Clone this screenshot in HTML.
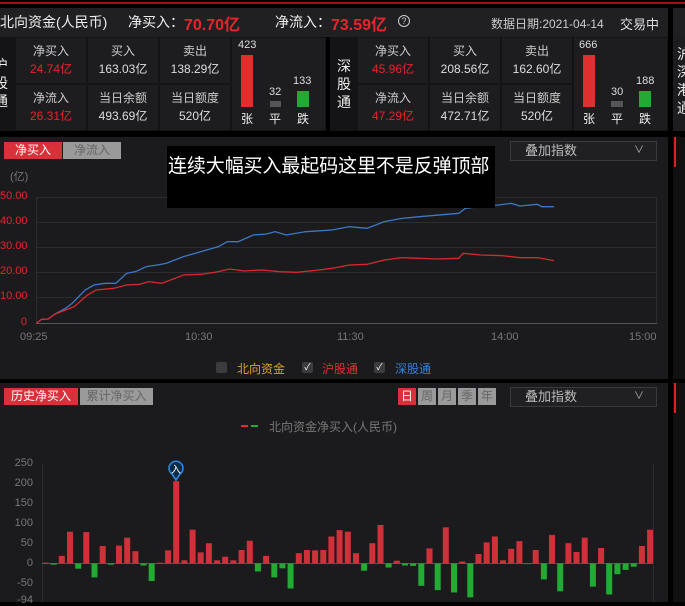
<!DOCTYPE html>
<html><head><meta charset="utf-8"><style>
*{margin:0;padding:0;box-sizing:border-box}
body{width:685px;height:602px;background:#000;overflow:hidden;position:relative;font-family:"Liberation Sans","Noto Sans CJK SC",sans-serif;color:#ddd}
.a{position:absolute;white-space:nowrap}
.red{color:#e8242b}
.cell{position:absolute;background:#1d1d20;text-align:center;font-size:12px;color:#ccc}
.cell .l{position:absolute;top:4px;left:0;right:0}
.cell .v{position:absolute;top:22px;left:0;right:0;color:#ddd}
.cell .v.red{color:#e8242b}
.btn{position:absolute;font-size:12px;text-align:center;line-height:17px}
.cb{position:absolute;width:11px;height:11px;background:#3c3c40;border-radius:2px;color:#fff;font-size:9px;line-height:11px;text-align:center}
</style></head><body>
<div class="a" style="left:0;top:2px;width:685px;height:2px;background:#a01010"></div>
<div class="a" style="left:0;top:8px;width:668px;height:29px;background:#202023"></div>
<div class="a" style="left:0;top:12px;font-size:14px;color:#eee">北向资金(人民币)</div>
<div class="a" style="left:128px;top:12px;font-size:14px;color:#eee">净买入：</div>
<div class="a red" style="left:184px;top:11px;font-size:16px;font-weight:bold">70.70亿</div>
<div class="a" style="left:275px;top:12px;font-size:14px;color:#eee">净流入：</div>
<div class="a red" style="left:331px;top:11px;font-size:16px;font-weight:bold">73.59亿</div>
<div class="a" style="left:398px;top:15px;width:12px;height:12px;border:1px solid #ccc;border-radius:50%;font-size:9px;text-align:center;line-height:10px;color:#ccc">?</div>
<div class="a" style="left:491px;top:15px;font-size:12px;color:#ccc">数据日期:2021-04-14</div>
<div class="a" style="left:620px;top:14px;font-size:13px;color:#ddd">交易中</div>
<div class="a" style="left:673px;top:8px;width:12px;height:29px;background:#202023"></div>

<!-- left panel -->
<div class="a" style="left:0;top:37px;width:326px;height:94px;background:#141416"></div>
<div class="a" style="left:-6px;top:56px;font-size:14px;line-height:18px;color:#eee;width:14px;white-space:normal">沪股通</div>
<div class="cell" style="left:16px;top:38px;width:70px;height:45px"><div class="l">净买入</div><div class="v red">24.74亿</div></div>
<div class="cell" style="left:88px;top:38px;width:70px;height:45px"><div class="l">买入</div><div class="v">163.03亿</div></div>
<div class="cell" style="left:160px;top:38px;width:70px;height:45px"><div class="l">卖出</div><div class="v">138.29亿</div></div>
<div class="cell" style="left:16px;top:85px;width:70px;height:45px"><div class="l">净流入</div><div class="v red">26.31亿</div></div>
<div class="cell" style="left:88px;top:85px;width:70px;height:45px"><div class="l">当日余额</div><div class="v">493.69亿</div></div>
<div class="cell" style="left:160px;top:85px;width:70px;height:45px"><div class="l">当日额度</div><div class="v">520亿</div></div>
<div class="a" style="left:232px;top:38px;width:93px;height:92px;background:#1d1d20"></div>
<div class="a" style="left:238px;top:39px;font-size:11px;color:#ddd">423</div>
<div class="a" style="left:241px;top:55px;width:12px;height:52px;background:#e02f2f"></div>
<div class="a" style="left:241px;top:110px;font-size:12px;color:#eee">张</div>
<div class="a" style="left:269px;top:86px;font-size:11px;color:#ddd">32</div>
<div class="a" style="left:270px;top:101px;width:11px;height:6px;background:#555"></div>
<div class="a" style="left:269px;top:110px;font-size:12px;color:#eee">平</div>
<div class="a" style="left:293px;top:75px;font-size:11px;color:#ddd">133</div>
<div class="a" style="left:297px;top:91px;width:12px;height:16px;background:#22aa33"></div>
<div class="a" style="left:297px;top:110px;font-size:12px;color:#eee">跌</div>

<!-- right panel -->
<div class="a" style="left:330px;top:37px;width:338px;height:94px;background:#141416"></div>
<div class="a" style="left:337px;top:57px;font-size:14px;line-height:18px;color:#eee;width:14px;white-space:normal">深股通</div>
<div class="cell" style="left:358px;top:38px;width:70px;height:45px"><div class="l">净买入</div><div class="v red">45.96亿</div></div>
<div class="cell" style="left:430px;top:38px;width:70px;height:45px"><div class="l">买入</div><div class="v">208.56亿</div></div>
<div class="cell" style="left:502px;top:38px;width:70px;height:45px"><div class="l">卖出</div><div class="v">162.60亿</div></div>
<div class="cell" style="left:358px;top:85px;width:70px;height:45px"><div class="l">净流入</div><div class="v red">47.29亿</div></div>
<div class="cell" style="left:430px;top:85px;width:70px;height:45px"><div class="l">当日余额</div><div class="v">472.71亿</div></div>
<div class="cell" style="left:502px;top:85px;width:70px;height:45px"><div class="l">当日额度</div><div class="v">520亿</div></div>
<div class="a" style="left:574px;top:38px;width:93px;height:92px;background:#1d1d20"></div>
<div class="a" style="left:579px;top:39px;font-size:11px;color:#ddd">666</div>
<div class="a" style="left:583px;top:55px;width:12px;height:52px;background:#e02f2f"></div>
<div class="a" style="left:583px;top:110px;font-size:12px;color:#eee">张</div>
<div class="a" style="left:611px;top:86px;font-size:11px;color:#ddd">30</div>
<div class="a" style="left:611px;top:101px;width:12px;height:6px;background:#555"></div>
<div class="a" style="left:611px;top:110px;font-size:12px;color:#eee">平</div>
<div class="a" style="left:636px;top:75px;font-size:11px;color:#ddd">188</div>
<div class="a" style="left:639px;top:91px;width:12px;height:16px;background:#22aa33"></div>
<div class="a" style="left:639px;top:110px;font-size:12px;color:#eee">跌</div>
<div class="a" style="left:673px;top:37px;width:12px;height:94px;background:#1d1d20"></div>
<div class="a" style="left:677px;top:45px;font-size:14px;line-height:18px;color:#eee;width:10px;white-space:normal">沪深港通</div>

<!-- main chart -->
<div class="a" style="left:0;top:137px;width:668px;height:242px;background:#1b1b1e"></div>
<div class="a" style="left:673px;top:137px;width:12px;height:242px;background:#111"></div>
<div class="a" style="left:674px;top:137px;width:2px;height:30px;background:#e02020"></div>
<div class="btn" style="left:4px;top:142px;width:58px;background:#d9303a;color:#fff">净买入</div>
<div class="btn" style="left:63px;top:142px;width:58px;background:#9a9a9a;color:#666">净流入</div>
<div class="a" style="left:510px;top:141px;width:147px;height:20px;border:1px solid #3a3a3e;background:#202023;font-size:13px;color:#bbb;padding-left:14px;line-height:18px">叠加指数<span style="position:absolute;right:12px;font-size:10px">∨</span></div>
<div class="a" style="left:10px;top:168px;font-size:11px;color:#777">(亿)</div>
<div class="a red" style="left:0;top:190px;font-size:11px;width:27px;text-align:right">50.00</div>
<div class="a red" style="left:0;top:215px;font-size:11px;width:27px;text-align:right">40.00</div>
<div class="a red" style="left:0;top:240px;font-size:11px;width:27px;text-align:right">30.00</div>
<div class="a red" style="left:0;top:265px;font-size:11px;width:27px;text-align:right">20.00</div>
<div class="a red" style="left:0;top:290px;font-size:11px;width:27px;text-align:right">10.00</div>
<div class="a red" style="left:0;top:316px;font-size:11px;width:27px;text-align:right">0</div>
<div class="a" style="left:20px;top:331px;font-size:11px;color:#777">09:25</div>
<div class="a" style="left:185px;top:331px;font-size:11px;color:#777">10:30</div>
<div class="a" style="left:337px;top:331px;font-size:11px;color:#777">11:30</div>
<div class="a" style="left:491px;top:331px;font-size:11px;color:#777">14:00</div>
<div class="a" style="left:629px;top:331px;font-size:11px;color:#777">15:00</div>
<div class="cb" style="left:216px;top:362px"></div>
<div class="a" style="left:237px;top:360px;font-size:12px;color:#e0a020">北向资金</div>
<div class="cb" style="left:302px;top:362px">✓</div>
<div class="a" style="left:322px;top:360px;font-size:12px;color:#e02f2f">沪股通</div>
<div class="cb" style="left:374px;top:362px">✓</div>
<div class="a" style="left:395px;top:360px;font-size:12px;color:#3b7fd0">深股通</div>

<!-- bottom -->
<div class="a" style="left:0;top:383px;width:668px;height:219px;background:#1b1b1e"></div>
<div class="a" style="left:673px;top:383px;width:12px;height:219px;background:#111"></div>
<div class="a" style="left:674px;top:383px;width:2px;height:30px;background:#e02020"></div>
<div class="btn" style="left:4px;top:388px;width:74px;background:#d9303a;color:#fff">历史净买入</div>
<div class="btn" style="left:80px;top:388px;width:73px;background:#9a9a9a;color:#666">累计净买入</div>
<div class="btn" style="left:398px;top:388px;width:18px;background:#d9303a;color:#fff">日</div>
<div class="btn" style="left:418px;top:388px;width:18px;background:#9a9a9a;color:#666">周</div>
<div class="btn" style="left:438px;top:388px;width:18px;background:#9a9a9a;color:#666">月</div>
<div class="btn" style="left:458px;top:388px;width:18px;background:#9a9a9a;color:#666">季</div>
<div class="btn" style="left:478px;top:388px;width:18px;background:#9a9a9a;color:#666">年</div>
<div class="a" style="left:510px;top:387px;width:147px;height:20px;border:1px solid #3a3a3e;background:#202023;font-size:13px;color:#bbb;padding-left:14px;line-height:18px">叠加指数<span style="position:absolute;right:12px;font-size:10px">∨</span></div>
<div class="a" style="left:241px;top:425px;width:7px;height:2px;background:#e02f2f"></div>
<div class="a" style="left:251px;top:425px;width:7px;height:2px;background:#22aa33"></div>
<div class="a" style="left:269px;top:418px;font-size:12px;color:#777">北向资金净买入(人民币)</div>
<div id="yl"></div>

<svg class="a" style="left:0;top:0" width="685" height="602" id="sv">
<g stroke="#2c2c30" stroke-width="1">
<line x1="36" y1="197.5" x2="657" y2="197.5"/><line x1="36" y1="222.5" x2="657" y2="222.5"/><line x1="36" y1="247.5" x2="657" y2="247.5"/><line x1="36" y1="272.5" x2="657" y2="272.5"/><line x1="36" y1="297.5" x2="657" y2="297.5"/>
<line x1="36.5" y1="197" x2="36.5" y2="323"/><line x1="656.5" y1="197" x2="656.5" y2="323"/>
<line x1="42.5" y1="464" x2="42.5" y2="602"/><line x1="653.5" y1="464" x2="653.5" y2="602"/>
</g>
<line x1="36" y1="323.5" x2="657" y2="323.5" stroke="#555"/>
<line x1="42" y1="563.5" x2="653" y2="563.5" stroke="#555"/>
<g transform="translate(0,135) scale(0.43687,0.33333)" fill="none">
<polyline stroke="#3b78c8" stroke-width="1.3" vector-effect="non-scaling-stroke" points="83,565 95,553 110,552 125,538 150,520 165,505 195,465 215,450 240,445 265,445 290,415 310,410 335,395 360,390 380,385 420,365 460,350 500,335 520,320 545,320 580,300 610,297 630,290 655,300 700,290 760,285 800,275 840,280 880,260 920,250 960,245 1050,235 1065,220 1100,215 1140,210 1170,205 1190,213 1230,208 1240,215 1268,215"/>
<polyline stroke="#d8282f" stroke-width="1.3" vector-effect="non-scaling-stroke" points="83,565 95,553 110,552 125,538 150,525 170,515 200,480 220,465 260,460 290,450 320,448 340,440 370,445 400,430 420,420 460,418 500,410 525,402 560,408 600,405 640,410 680,412 730,405 760,400 800,390 840,388 880,375 920,368 960,370 1000,372 1050,370 1060,355 1100,360 1150,362 1190,368 1230,368 1268,377"/>
</g>
<g id="bars"></g>
<g transform="translate(176,469)">
<path d="M0,11 L-4,5 A7,7 0 1 1 4,5 Z" fill="#0d2a4a" stroke="#2a88e0" stroke-width="1.6"/>
<text x="0" y="4" font-size="10" fill="#fff" text-anchor="middle" font-family="Liberation Sans,Noto Sans CJK SC,sans-serif">入</text>
</g>
</svg>
<div class="a" style="left:167px;top:146px;width:328px;height:62px;background:#000"></div>
<div class="a" style="left:168px;top:151px;font-size:19px;color:#fff;letter-spacing:-0.1px">连续大幅买入最起码这里不是反弹顶部</div>
<script>
var v=[2,-3,19,80,-13,79,-35,44,-3,45,65,31,-5,-44,2,33,207,8,85,28,51,8,17,8,34,57,-20,19,-35,-12,-63,26,34,33,34,68,84,80,26,-18,51,97,-10,7,-5,-6,-56,38,-67,91,-73,5,-85,24,53,68,8,37,56,1,34,-40,72,-70,51,29,65,-58,39,-78,-27,-16,-8,44,85];
var s='',k=0.3976;
for(var i=0;i<v.length;i++){var x=42.5+i*8.17,h=Math.abs(v[i])*k,y=v[i]>0?563.5-h:563.5;
s+='<rect x="'+x.toFixed(1)+'" y="'+y.toFixed(1)+'" width="6" height="'+Math.max(h,1).toFixed(1)+'" fill="'+(v[i]>0?'#d0303a':'#22aa33')+'"/>';}
document.getElementById('bars').innerHTML=s;
var L=[[250,464],[200,484],[150,504],[100,524],[50,544],[0,564],[-50,584],[-94,601]],t='';
L.forEach(function(a){t+='<div class="a" style="left:0;width:33px;text-align:right;top:'+(a[1]-7)+'px;font-size:11px;color:#777">'+a[0]+'</div>';});
document.getElementById('yl').innerHTML=t;
</script>
</body></html>
